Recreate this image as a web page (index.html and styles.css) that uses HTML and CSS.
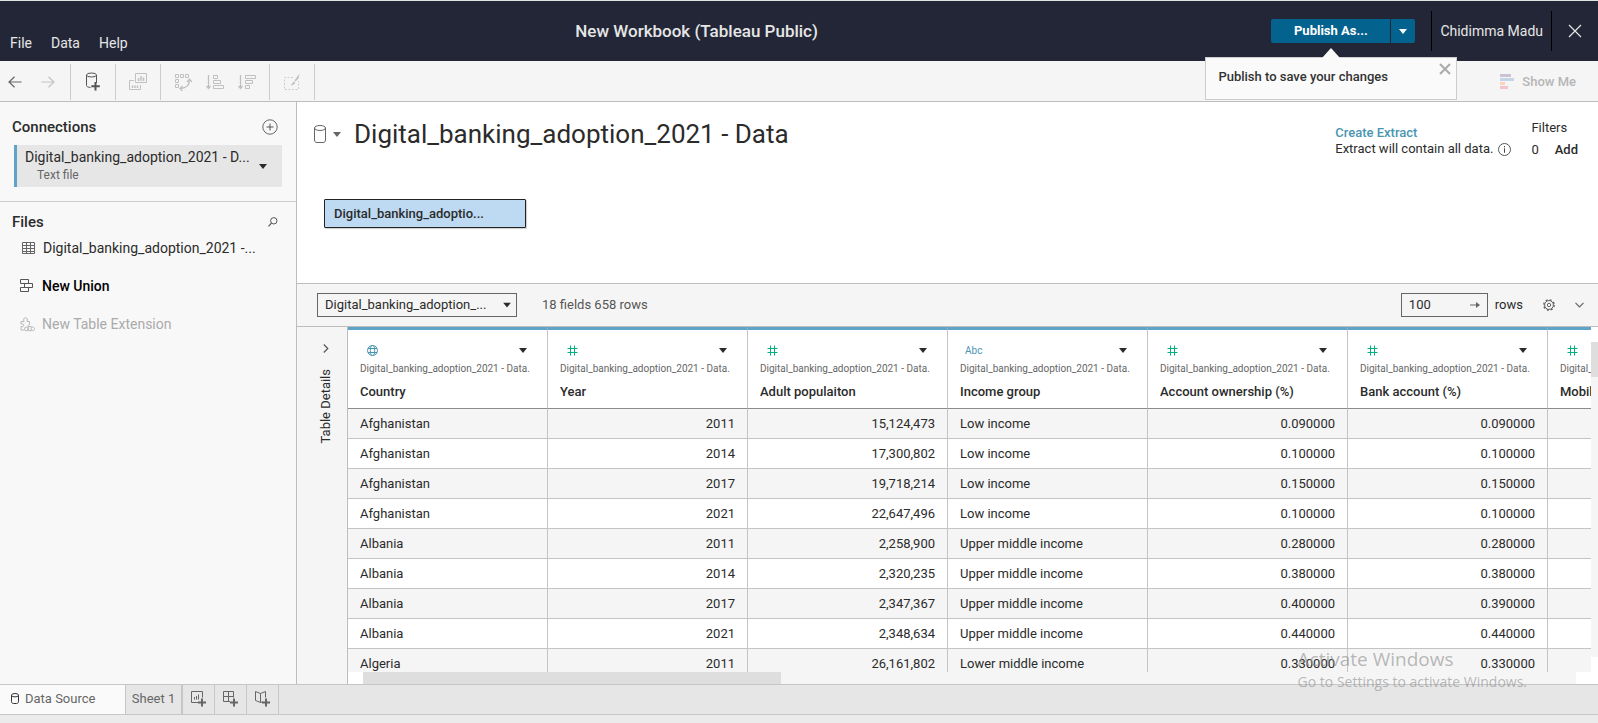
FILE: index.html
```html
<!DOCTYPE html>
<html lang="en">
<head>
<meta charset="utf-8">
<title>New Workbook (Tableau Public)</title>
<link rel="stylesheet" href="styles.css">
</head>
<body>
<svg class="defs" width="0" height="0" aria-hidden="true">
  <symbol id="hash" viewBox="0 0 11 11"><path d="M3.5 .5v10M7.5 .5v10M.5 3.5h10M.5 7.5h10" fill="none" stroke="#00b180"/></symbol>
  <symbol id="caret" viewBox="0 0 8 5"><path d="M0 0h8L4 5z" fill="currentColor"/></symbol>
</svg>

<header class="header">
  <nav class="menu">
    <button type="button">File</button>
    <button type="button">Data</button>
    <button type="button">Help</button>
  </nav>
  <h1 class="workbook">New Workbook (Tableau Public)</h1>
  <div class="account">
    <div class="publish">
      <button type="button" class="publish-main">Publish As...</button>
      <button type="button" class="publish-more" aria-label="Publish options"><svg width="8" height="5"><use href="#caret"/></svg></button>
      <div class="tip" role="status">
        <span>Publish to save your changes</span>
        <button type="button" class="tip-close" aria-label="Dismiss"><svg width="12" height="12" viewBox="0 0 12 12"><path d="M1 1l10 10M11 1L1 11" stroke="#aaa" stroke-width="2"/></svg></button>
      </div>
    </div>
    <a class="user" href="#">Chidimma Madu</a>
    <button type="button" class="close" aria-label="Close"><svg width="14" height="14" viewBox="0 0 14 14"><path d="M1 1l12 12M13 1L1 13" stroke="#e6e6e6" stroke-width="1.2"/></svg></button>
  </div>
</header>

<div class="toolbar" role="toolbar" aria-label="Main">
  <div class="group nav-group">
    <button type="button" aria-label="Undo"><svg width="14" height="12" viewBox="0 0 14 12"><path d="M13.500 6H1M6.500 .7L1 6l5.500 5.300" fill="none" stroke="#666" stroke-width="1.200"/></svg></button>
    <button type="button" aria-label="Redo" disabled><svg width="14" height="12" viewBox="0 0 14 12"><path d="M.5 6H13M7.500 .7L13 6l-5.500 5.300" fill="none" stroke="#c4c4c4" stroke-width="1.200"/></svg></button>
  </div>
  <div class="group">
    <button type="button" aria-label="New data source"><svg width="16" height="20" viewBox="0 0 16 20"><g fill="none" stroke="#555"><path d="M1.500 3v10.500c0 1 1.500 1.700 4 2"/><path d="M11.500 3v8"/><ellipse cx="6.500" cy="3" rx="5" ry="2"/><path d="M10.500 10v8.500M6.300 14.300h8.500" stroke-width="2"/></g></svg></button>
  </div>
  <div class="group">
    <button type="button" aria-label="New worksheet" disabled><svg width="18" height="18" viewBox="0 0 18 18"><g fill="none" stroke="#c0c0c0"><path d="M6.500 .5h11v9h-11z"/><path d="M9.500 8V5M12 8V3M14.500 8V4.500" stroke-width="1.500"/><path d="M5 7.500H.5v9h11V12"/><path d="M3.500 15v-2.500M6 15v-2.500M8.500 15v-2.500" stroke-width="1.500"/></g></svg></button>
  </div>
  <div class="group wide-group">
    <button type="button" aria-label="Swap rows and columns" disabled><svg width="18" height="18" viewBox="0 0 18 18"><g fill="none" stroke="#c0c0c0"><path d="M1.500 1.500h3v3h-3zM6.500 1.500h3v3h-3zM11.500 1.500h3v3h-3zM1.500 6.500h3v3h-3zM1.500 11.500h3v3h-3z"/><path d="M15.500 7c0 5-3 8-9 8.500M13 9l2.500-2.800L18 9M8.500 13L6 15.500 8.500 18" stroke-width="1.300"/></g></svg></button>
    <button type="button" aria-label="Sort ascending" disabled><svg width="18" height="16" viewBox="0 0 18 16"><g fill="none" stroke="#c0c0c0"><path d="M2.500 1v13M.5 12l2 2.500 2-2.500" stroke-width="1.300"/><path d="M7.500 1.500h4v3h-4zM7.500 6.500h7v3h-7zM7.500 11.500h10v3h-10z"/></g></svg></button>
    <button type="button" aria-label="Sort descending" disabled><svg width="18" height="16" viewBox="0 0 18 16"><g fill="none" stroke="#c0c0c0"><path d="M2.500 1v13M.5 12l2 2.500 2-2.500" stroke-width="1.300"/><path d="M7.500 1.500h10v3h-10zM7.500 6.500h7v3h-7zM7.500 11.500h4v3h-4z"/></g></svg></button>
  </div>
  <div class="group">
    <button type="button" aria-label="Format" disabled><svg width="16" height="18" viewBox="0 0 16 18"><path d="M9 4.500H.5v12h14V8" fill="none" stroke="#ccc" stroke-dasharray="2 1.500"/><path d="M15.500 .5l-1 5-3 3-1-1zM9.800 8.500l1.500 1.300c-1 2-2.500 2.700-4.500 2.400 1.500-1 1.300-2.500 3-3.700z" fill="#c0c0c0"/></svg></button>
  </div>
  <button type="button" class="show-me" disabled><svg width="14" height="16" viewBox="0 0 14 16"><path d="M0 0h11v3H0z" fill="#cbc3d3"/><path d="M0 4h14v3H0z" fill="#c5d5e8"/><path d="M0 8h5v3H0z" fill="#f9d5c0"/><path d="M0 12h8v3H0z" fill="#f6c3ca"/></svg>Show Me</button>
</div>

<main class="main">
  <aside class="sidebar">
    <section class="connections">
      <div class="side-head">
        <h2>Connections</h2>
        <button type="button" aria-label="Add connection"><svg width="16" height="16" viewBox="0 0 16 16"><path d="M8 4.500v7M4.500 8h7" stroke="#555"/><circle cx="8" cy="8" r="7.200" fill="none" stroke="#666"/></svg></button>
      </div>
      <button type="button" class="connection">
        <span class="connection-text"><span>Digital_banking_adoption_2021 - D...</span><small>Text file</small></span>
        <svg width="8" height="5"><use href="#caret"/></svg>
      </button>
    </section>
    <section class="files">
      <div class="side-head">
        <h2>Files</h2>
        <button type="button" aria-label="Search files"><svg width="10" height="10" viewBox="0 0 10 10"><circle cx="5.800" cy="3.800" r="3.200" fill="none" stroke="#555"/><path d="M3.500 6.200L.5 9.300" stroke="#555" stroke-width="1.200"/></svg></button>
      </div>
      <a class="file" href="#"><svg width="13" height="12" viewBox="0 0 13 12"><path d="M.5 .5h12v11H.5zM.5 3.500h12M.5 6.500h12M.5 9.500h12M4.500 .5v11M8.500 .5v11" fill="none" stroke="#666"/></svg>Digital_banking_adoption_2021 -...</a>
      <button type="button" class="side-action"><svg width="14" height="14" viewBox="0 0 14 14"><path d="M.5 .5h8v4h-8zM4.500 4.500h8v4h-8zM.5 8.500h8v4h-8z" fill="#f8f8f8" stroke="#555"/></svg>New Union</button>
      <button type="button" class="side-action" disabled><svg width="15" height="15" viewBox="0 0 15 15"><g fill="none" stroke="#b8b8b8"><path d="M1 4.500h3c-.8-2 0-3.800 1.500-3.800S7.800 2.500 7 4.500h2.500v3"/><path d="M1 4.500V7c2-.7 2.800.3 2.800 1.300S3 10 1 9.500V13h3M9.500 7.500l-2 1.500"/><circle cx="6.300" cy="12" r="1.800"/><path d="M8.200 9.500v4.200h3V9.500zM11.500 10c2-.3 3 .6 3 1.800s-1 2-3 1.800"/></g></svg>New Table Extension</button>
    </section>
  </aside>

  <div class="work">
    <section class="canvas">
      <div class="source">
        <div class="source-title">
          <button type="button" class="source-menu" aria-label="Data source options"><svg width="12" height="18" viewBox="0 0 12 18"><g fill="none" stroke="#666"><ellipse cx="6" cy="3" rx="5.500" ry="2.500"/><path d="M.5 3v12c0 1.500 1 2.500 2.500 2.500h6c1.500 0 2.500-1 2.500-2.500V3"/></g></svg><svg width="8" height="5"><use href="#caret"/></svg></button>
          <h2>Digital_banking_adoption_2021 - Data</h2>
        </div>
        <div class="extract">
          <a href="#">Create Extract</a>
          <p>Extract will contain all data. <svg width="13" height="13" viewBox="0 0 13 13"><circle cx="6.500" cy="6.500" r="6" fill="none" stroke="#555"/><path d="M6.500 5.300v4.500M6.500 3v1.300" stroke="#444"/></svg></p>
        </div>
        <div class="filters">
          <span>Filters</span>
          <p><span>0</span><button type="button">Add</button></p>
        </div>
      </div>
      <button type="button" class="node">Digital_banking_adoptio...</button>
    </section>

    <div class="grid-bar">
      <div class="table-pick">
        <select aria-label="Table"><option>Digital_banking_adoption_...</option></select>
        <svg width="8" height="6" viewBox="0 0 8 5"><use href="#caret"/></svg>
      </div>
      <span class="summary">18 fields 658 rows</span>
      <label class="rows"><span class="rows-box"><input type="text" value="100"><svg width="10" height="6" viewBox="0 0 10 6"><path d="M0 3h8" stroke="#666"/><path d="M6 0l4 3-4 3z" fill="#666"/></svg></span>rows</label>
      <button type="button" aria-label="Settings"><svg width="12" height="12" viewBox="0 0 12 12"><g fill="none" stroke="#666"><circle cx="6" cy="6" r="5.200" stroke-dasharray="2.080 2" stroke-width="1.400"/><circle cx="6" cy="6" r="4.400"/><circle cx="6" cy="6" r="1.700"/></g></svg></button>
      <button type="button" aria-label="Collapse"><svg width="9" height="6" viewBox="0 0 9 6"><path d="M.5 .8l4 4 4-4" fill="none" stroke="#666" stroke-width="1.200"/></svg></button>
    </div>

    <section class="grid">
      <button type="button" class="details"><svg width="6" height="9" viewBox="0 0 6 9"><path d="M.8 .5l4 4-4 4" fill="none" stroke="#555" stroke-width="1.200"/></svg><span>Table Details</span></button>
      <div class="sheet">
        <div class="clip">
          <table class="data">
            <thead><tr id="head"></tr></thead>
            <tbody id="rows"></tbody>
          </table>
        </div>
        <div class="hscroll"><i></i></div>
      </div>
      <div class="vscroll"><i></i></div>
    </section>
  </div>
</main>

<nav class="tabs">
  <a class="tab active" href="#"><svg width="8" height="11" viewBox="0 0 8 11"><g fill="none" stroke="#333"><ellipse cx="4" cy="2.200" rx="3.500" ry="1.700"/><path d="M.5 2.200v6.300c0 1.200.8 2 2 2h3c1.200 0 2-.8 2-2V2.200"/></g></svg>Data Source</a>
  <a class="tab sheet-tab" href="#">Sheet 1</a>
  <button type="button" class="add" aria-label="New worksheet"><svg width="16" height="16" viewBox="0 0 16 16"><g fill="none" stroke="#666"><path d="M7 11.500H.5V.5h11v6M3.500 8.500V6M5.500 8.500V5M7.500 8.500V3.500"/><path d="M11 7.500v8M7 11.500h8" stroke-width="2"/></g></svg></button>
  <button type="button" class="add" aria-label="New dashboard"><svg width="16" height="16" viewBox="0 0 16 16"><g fill="none" stroke="#666"><path d="M7 10.500H.5V.5h10v6M5.500 .5v10M.5 5.500h10"/><path d="M11 7.500v8M7 11.500h8" stroke-width="2"/></g></svg></button>
  <button type="button" class="add" aria-label="New story"><svg width="16" height="16" viewBox="0 0 16 16"><g fill="none" stroke="#666"><path d="M5.500 2.500L.5 .5v9l5 2zM5.500 2.500l5-2v6M5.500 11.500l2-.7"/><path d="M11 7.500v8M7 11.500h8" stroke-width="2"/></g></svg></button>
</nav>
<footer class="status"></footer>

<div class="activate"><strong>Activate Windows</strong><span>Go to Settings to activate Windows.</span></div>
<script src="app.js"></script>
</body>
</html>
```

FILE: styles.css
```css
* { box-sizing: border-box; }
body {
  margin: 0;
  height: 100vh;
  display: flex;
  flex-direction: column;
  overflow: hidden;
  position: relative;
  font: 13px/16px Roboto, "Liberation Sans", sans-serif;
  color: #2b2b2b;
  background: #fff;
}
button {
  font: inherit;
  color: inherit;
  background: none;
  border: 0;
  padding: 0;
  display: flex;
  align-items: center;
}
a { color: inherit; text-decoration: none; }
h1, h2, p { margin: 0; font-weight: 500; }
svg { flex: none; display: block; }
.defs { position: absolute; }

.header {
  flex: none;
  height: 61px;
  display: grid;
  grid-template-columns: 36% auto 1fr;
  align-items: center;
  background: #232636;
  border-top: 1px solid #dfe3de;
  color: #e6e6e6;
}
.menu {
  align-self: end;
  display: flex;
  gap: 19px;
  padding: 0 10px 10px;
}
.menu button { font-size: 14px; }
.workbook { font-size: 17px; line-height: 22px; }
.account { display: flex; justify-content: flex-end; align-items: center; }
.publish { position: relative; display: flex; gap: 1px; margin-right: 16px; color: #fff; }
.publish button { height: 24px; justify-content: center; background: #04628e; }
.publish .publish-main { width: 119px; font-weight: 700; border-radius: 2px 0 0 2px; }
.publish .publish-more { width: 24px; border-radius: 0 2px 2px 0; }
.user {
  height: 40px;
  display: flex;
  align-items: center;
  padding: 0 8px;
  border: solid #000;
  border-width: 0 1px;
  font-size: 14px;
}
.close { padding: 0 16px; }
.tip {
  position: absolute;
  top: 38px;
  left: -66px;
  z-index: 2;
  width: 252px;
  height: 43px;
  display: flex;
  justify-content: space-between;
  padding: 5px 5px 0 12px;
  background: #fafafa;
  border: 1px solid #ccc;
  color: #333;
  font-weight: 500;
}
.tip::before {
  content: "";
  position: absolute;
  top: -10px;
  left: 116px;
  border: solid transparent;
  border-width: 0 9px 10px;
  border-bottom-color: #fafafa;
}
.tip span { line-height: 28px; }
.publish .tip-close { height: 12px; background: none; }

.toolbar {
  flex: none;
  height: 41px;
  display: flex;
  background: #f5f5f5;
  border-bottom: 1px solid #bdbdbd;
}
.group {
  width: 45px;
  display: flex;
  align-items: center;
  justify-content: center;
  margin: 3px 0 1px;
  border-right: 1px solid #ccc;
}
.nav-group { width: 71px; gap: 19px; padding-right: 7px; }
.wide-group { width: 109px; gap: 14px; }
.show-me { margin-left: auto; gap: 8px; padding: 1px 22px 0 0; color: #b5b5b5; font-weight: 500; }

.main { flex: 1; min-height: 0; display: flex; }
.sidebar { flex: none; width: 297px; background: #f8f8f8; border-right: 1px solid #bdbdbd; }
.side-head { display: flex; align-items: center; justify-content: space-between; padding: 0 18px 0 12px; }
.side-head h2 { font-size: 15px; line-height: 20px; }
.connections { padding-top: 15px; height: 100px; border-bottom: 1px solid #ccc; }
.connection {
  width: 268px;
  height: 42px;
  margin: 8px 0 0 14px;
  justify-content: space-between;
  padding-right: 15px;
  text-align: left;
  font-size: 14px;
  background: #e6e6e6;
  border-left: 3px solid #5fa3c7;
}
.connection-text { padding-left: 8px; }
.connection small { display: block; padding: 2px 0 0 12px; font-size: 12px; color: #666; }
.files { padding-top: 10px; }
.file, .side-action { display: flex; align-items: center; font-size: 14px; line-height: 20px; }
.file { gap: 8px; padding: 6px 0 0 22px; }
.side-action { gap: 8px; margin: 18px 0 0 20px; font-weight: 500; color: #000; }
.side-action:disabled { font-weight: 400; color: #aaa; gap: 7px; }

.work { flex: 1; min-width: 0; display: flex; flex-direction: column; }
.canvas { flex: none; height: 182px; border-bottom: 1px solid #bdbdbd; }
.source { display: flex; align-items: flex-start; padding: 15px 20px 0 17px; }
.source-title { flex: 1; display: flex; align-items: center; gap: 13px; }
.source-menu { gap: 7px; color: #666; }
.source-title h2 { font-size: 26px; line-height: 34px; font-weight: 400; }
.extract { padding-top: 8px; margin-right: 20px; }
.extract a { color: #4996b2; font-weight: 500; }
.extract p { display: flex; gap: 5px; align-items: center; font-weight: 400; }
.filters { padding-top: 3px; }
.filters p { display: flex; gap: 16px; padding-top: 6px; font-weight: 400; }
.filters button { font-weight: 500; }
.node {
  width: 202px;
  height: 29px;
  margin: 41px 0 0 27px;
  padding-left: 9px;
  background: #bddaf2;
  border: 1px solid #222;
  border-radius: 1px;
  box-shadow: 1px 1px 1px #ccc;
  font-weight: 500;
}

.grid-bar {
  flex: none;
  height: 43px;
  display: flex;
  align-items: center;
  padding: 0 14px 0 20px;
  background: #f5f5f5;
  border-bottom: 1px solid #bdbdbd;
}
.table-pick { position: relative; }
.table-pick select {
  appearance: none;
  width: 200px;
  height: 24px;
  padding: 0 7px;
  font: inherit;
  color: inherit;
  background: #f5f5f5;
  border: 1px solid #666;
  border-radius: 0;
}
.table-pick svg { position: absolute; right: 6px; top: 9px; pointer-events: none; }
.summary { margin-left: 25px; color: #555; }
.rows { display: flex; align-items: center; gap: 7px; margin-left: auto; }
.rows-box { display: flex; align-items: center; width: 87px; height: 24px; padding-right: 7px; border: 1px solid #666; }
.rows input { flex: 1; min-width: 0; padding: 0 7px; border: 0; background: none; font: inherit; color: inherit; }
.grid-bar > button { margin-left: 20px; }

.grid { flex: 1; min-height: 0; display: flex; }
.details {
  width: 51px;
  flex: none;
  flex-direction: column;
  gap: 16px;
  padding: 17px 0 0 7px;
  background: #f5f5f5;
  border-right: 1px solid #bdbdbd;
}
.details span { writing-mode: vertical-rl; transform: rotate(180deg); }
.sheet { flex: 1; min-width: 0; display: flex; flex-direction: column; }
.clip { flex: 1; min-height: 0; overflow: hidden; }
.data { width: 1400px; table-layout: fixed; border-spacing: 0; }
.data th {
  height: 82px;
  padding: 14px 10px 8px 12px;
  text-align: left;
  vertical-align: top;
  border-top: 3px solid #5fa3c7;
  border-right: 1px solid #c4c4c4;
  border-bottom: 1px solid #8c8c8c;
  font-weight: 500;
  white-space: nowrap;
  overflow: hidden;
}
.data td {
  height: 30px;
  padding: 0 12px;
  border-right: 1px solid #c4c4c4;
  border-bottom: 1px solid #c4c4c4;
}
.data tr:nth-child(odd) td { background: #f5f5f5; }
.data .num { text-align: right; }
.kind { display: flex; justify-content: space-between; align-items: center; height: 13px; padding: 0 10px 0 7px; }
.kind abbr { font-size: 10px; font-weight: 400; color: #4996b2; margin-left: -2px; }
.table-name { display: block; font-size: 10px; line-height: 14px; font-weight: 400; color: #666; padding-top: 5px; }
.field { display: block; padding-top: 8px; }
.hscroll { flex: none; height: 12px; margin: 0 15px; background: #f5f5f5; }
.hscroll i { display: block; width: 34.5%; height: 12px; background: #dedede; }
.vscroll { flex: none; width: 7px; margin: 15px 0 27px; background: #f5f5f5; }
.vscroll i { display: block; height: 35px; background: #dedede; }

.tabs { flex: none; display: flex; height: 31px; background: #e6e6e6; border: solid #c6c6c6; border-width: 1px 0; }
.tab, .add { display: flex; align-items: center; border-right: 1px solid #c6c6c6; color: #666; padding-bottom: 2px; }
.tab.active { width: 126px; gap: 6px; padding-left: 11px; background: #fafafa; }
.sheet-tab { width: 57px; justify-content: center; border-right-width: 2px; }
.add { width: 32px; justify-content: center; }
.status { flex: none; height: 8px; background: #ebebeb; }

.activate {
  position: absolute;
  right: 71px;
  bottom: 31px;
  display: flex;
  flex-direction: column;
  font-family: "Open Sans", "Noto Sans", sans-serif;
  color: rgba(140, 140, 140, .6);
  pointer-events: none;
}
.activate strong { font-size: 19px; line-height: 26px; font-weight: 400; }
.activate span { font-size: 14px; line-height: 20px; }
```

FILE: app.js
```javascript
const globe = '<svg width="11" height="11" viewBox="0 0 11 11"><g fill="none" stroke="#4996b2"><circle cx="5.5" cy="5.5" r="5"/><ellipse cx="5.5" cy="5.500" rx="2.200" ry="5"/><path d="M1 3.500h9M1 7.500h9"/></g></svg>';
const hash = '<svg width="11" height="11"><use href="#hash"/></svg>';
const caret = '<svg width="8" height="5"><use href="#caret"/></svg>';

const fields = [
  ["Country", globe], ["Year", hash], ["Adult populaiton", hash],
  ["Income group", "<abbr>Abc</abbr>"], ["Account ownership (%)", hash],
  ["Bank account (%)", hash], ["Mobile money account (%)", hash]
];
const rows = [
  ["Afghanistan", "2011", "15,124,473", "Low income", "0.090000", "0.090000", ""],
  ["Afghanistan", "2014", "17,300,802", "Low income", "0.100000", "0.100000", ""],
  ["Afghanistan", "2017", "19,718,214", "Low income", "0.150000", "0.150000", ""],
  ["Afghanistan", "2021", "22,647,496", "Low income", "0.100000", "0.100000", ""],
  ["Albania", "2011", "2,258,900", "Upper middle income", "0.280000", "0.280000", ""],
  ["Albania", "2014", "2,320,235", "Upper middle income", "0.380000", "0.380000", ""],
  ["Albania", "2017", "2,347,367", "Upper middle income", "0.400000", "0.390000", ""],
  ["Albania", "2021", "2,348,634", "Upper middle income", "0.440000", "0.440000", ""],
  ["Algeria", "2011", "26,161,802", "Lower middle income", "0.330000", "0.330000", ""]
];

document.getElementById("head").innerHTML = fields.map(([name, icon]) =>
  `<th scope="col"><div class="kind">${icon}${caret}</div><span class="table-name">Digital_banking_adoption_2021 - Data.</span><span class="field">${name}</span></th>`
).join("");

document.getElementById("rows").innerHTML = rows.map(row =>
  "<tr>" + row.map((value, i) => `<td${i === 0 || i === 3 ? "" : ' class="num"'}>${value}</td>`).join("") + "</tr>"
).join("");
```
